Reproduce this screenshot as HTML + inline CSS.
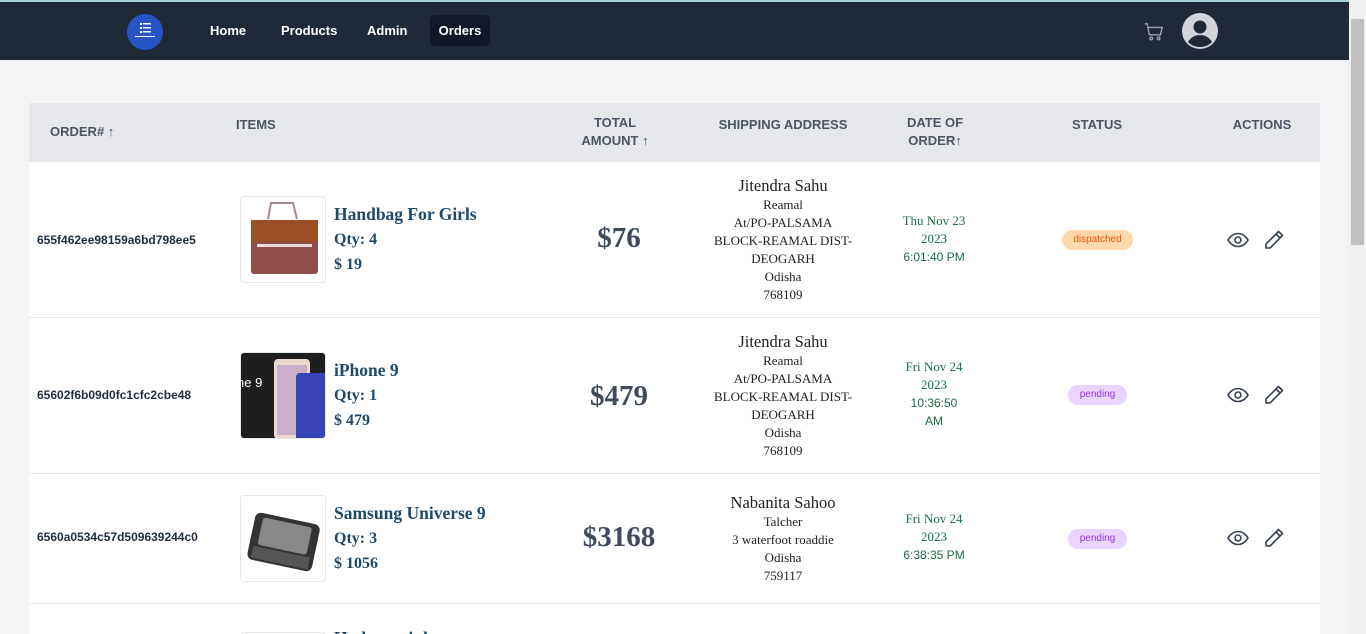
<!DOCTYPE html>
<html style="height:634px;overflow:hidden"><head><meta charset="utf-8"><style>
*{box-sizing:border-box;margin:0;padding:0}
body{width:1366px;height:634px;overflow:hidden;background:#f3f4f6;position:relative;font-family:"Liberation Sans",sans-serif}
.a{position:absolute}
nav{position:absolute;left:0;top:0;width:1349px;height:60px;background:#1f2937;border-top:2px solid #a8d0d8}
.nl{position:absolute;top:13px;height:31px;line-height:31px;color:#fff;font-weight:bold;font-size:13px;padding:0 11px;border-radius:5px}
.sb{position:absolute;right:0;top:0;width:17px;height:634px;background:#f0f0f0}
.th{position:absolute;color:#4b5563;font-weight:bold;font-size:13px;text-align:center;line-height:18px}
.row{position:absolute;left:29px;width:1291px;background:#fff;border-bottom:1px solid #e5e7eb;overflow:hidden}
.oid{position:absolute;left:8px;font-weight:bold;font-size:12px;color:#1f2d3d}
.img{position:absolute;left:211px;width:86px;height:87px;border:1px solid #e5e7eb;border-radius:4px;overflow:hidden;background:#fff}
.nm{position:absolute;left:305px;font-family:"Liberation Serif",serif;font-weight:bold;color:#1e4a6a;font-size:17.5px;line-height:25px}
.nm span{font-size:16px;display:block}
.tot{position:absolute;left:530px;width:120px;text-align:center;font-family:"Liberation Serif",serif;font-weight:bold;font-size:29px;color:#3f4a5c}
.addr{position:absolute;left:664px;width:180px;text-align:center;font-family:"Liberation Serif",serif;color:#222;font-size:13px;line-height:18px}
.addr b{font-weight:normal;font-size:16.5px;display:block;line-height:20px}
.dt{position:absolute;left:855px;width:100px;text-align:center;font-family:"Liberation Serif",serif;color:#1a6e47;font-size:13px;line-height:18px}
.dt i{font-style:normal;font-family:"Liberation Sans",sans-serif;font-size:12px}
.pill{position:absolute;height:20px;line-height:20px;border-radius:10px;font-size:10px;text-align:center}
.ic{position:absolute}
</style></head><body>
<nav>
<div class="a" style="left:127px;top:12px;width:36px;height:36px;border-radius:50%;background:#2754c5">
<svg width="36" height="36"><g fill="#fff"><rect x="13" y="9" width="2" height="2"/><rect x="16" y="9" width="8" height="1.5"/><rect x="13" y="13" width="2" height="2"/><rect x="16" y="13" width="8" height="1.5"/><rect x="13" y="17" width="2" height="2"/><rect x="16" y="17" width="8" height="1.5"/><rect x="8" y="22" width="20" height="1"/></g></svg></div>
<div class="nl" style="left:199px">Home</div>
<div class="nl" style="left:270px">Products</div>
<div class="nl" style="left:356px">Admin</div>
<div class="nl" style="left:430px;background:#111827;width:60px;padding:0;text-align:center">Orders</div>
<svg class="a" style="left:1143px;top:19px" width="22" height="22" viewBox="0 0 24 24" fill="none" stroke="#9ca3af" stroke-width="1.5"><path d="M2 3h2.5l2.5 12h12l2-8H6"/><circle cx="9" cy="19" r="1.5"/><circle cx="17" cy="19" r="1.5"/></svg>
<svg class="a" style="left:1182px;top:11px" width="36" height="36" viewBox="0 0 36 36"><circle cx="18" cy="18" r="18" fill="#d1d5db"/><circle cx="18" cy="14" r="6.5" fill="#1f2937"/><path d="M6 29c3-5 7-7 12-7s9 2 12 7c-3 3-7 5-12 5s-9-2-12-5z" fill="#1f2937"/></svg>
</nav>
<div class="sb"><div class="a" style="left:2px;top:19px;width:13px;height:226px;background:#c1c1c1"></div></div>
<div class="a" style="left:29px;top:103px;width:1291px;height:59px;background:#e5e7eb"></div>
<div class="th" style="left:50px;top:123px">ORDER# ↑</div>
<div class="th" style="left:236px;top:116px">ITEMS</div>
<div class="th" style="left:570px;top:114px;width:90px">TOTAL<br>AMOUNT ↑</div>
<div class="th" style="left:713px;top:116px;width:140px">SHIPPING ADDRESS</div>
<div class="th" style="left:890px;top:114px;width:90px">DATE OF<br>ORDER↑</div>
<div class="th" style="left:1064px;top:116px;width:66px">STATUS</div>
<div class="th" style="left:1222px;top:116px;width:80px">ACTIONS</div>

<div class="row" style="top:162px;height:156px">
<div class="oid" style="top:71px">655f462ee98159a6bd798ee5</div>
<div class="img" style="top:34px"><svg width="86" height="87"><path d="M27 22 L30 6 H52 L56 22" fill="none" stroke="#a08a90" stroke-width="2"/><rect x="10" y="23" width="67" height="40" fill="#9c4e24"/><rect x="10" y="45" width="67" height="32" rx="3" fill="#8e4f4c"/><rect x="16" y="47" width="55" height="3" fill="#e8ddd8"/></svg></div>
<div class="nm" style="top:40px">Handbag For Girls<span>Qty: 4</span><span>$ 19</span></div>
<div class="tot" style="top:60px">$76</div>
<div class="addr" style="top:14px"><b>Jitendra Sahu</b>Reamal<br>At/PO-PALSAMA<br>BLOCK-REAMAL DIST-<br>DEOGARH<br>Odisha<br>768109</div>
<div class="dt" style="top:50px">Thu Nov 23<br>2023<br><i>6:01:40 PM</i></div>
<div class="pill" style="left:1033px;top:68px;width:71px;background:#fed7aa;color:#ea580c">dispatched</div>
</div>

<div class="row" style="top:318px;height:156px">
<div class="oid" style="top:70px">65602f6b09d0fc1cfc2cbe48</div>
<div class="img" style="top:34px;background:#1e1e1e"><svg width="86" height="87"><text x="-4" y="34" fill="#fff" font-size="13" font-family="Liberation Sans">ne 9</text><rect x="33" y="6" width="36" height="80" rx="4" fill="#e8d8d0"/><rect x="36" y="12" width="30" height="70" fill="#c8b0c8"/><rect x="55" y="20" width="32" height="70" rx="4" fill="#3844b8"/></svg></div>
<div class="nm" style="top:40px">iPhone 9<span>Qty: 1</span><span>$ 479</span></div>
<div class="tot" style="top:62px">$479</div>
<div class="addr" style="top:14px"><b>Jitendra Sahu</b>Reamal<br>At/PO-PALSAMA<br>BLOCK-REAMAL DIST-<br>DEOGARH<br>Odisha<br>768109</div>
<div class="dt" style="top:40px">Fri Nov 24<br>2023<br><i>10:36:50<br>AM</i></div>
<div class="pill" style="left:1039px;top:67px;width:59px;background:#e9d5ff;color:#9333ea">pending</div>
</div>

<div class="row" style="top:474px;height:130px">
<div class="oid" style="top:56px">6560a0534c57d509639244c0</div>
<div class="img" style="top:21px"><svg width="86" height="87"><g transform="rotate(12 43 44)"><rect x="10" y="22" width="66" height="48" rx="6" fill="#333"/><rect x="18" y="26" width="50" height="28" rx="3" fill="#888"/><rect x="14" y="56" width="58" height="12" fill="#555"/></g></svg></div>
<div class="nm" style="top:27px">Samsung Universe 9<span>Qty: 3</span><span>$ 1056</span></div>
<div class="tot" style="top:47px">$3168</div>
<div class="addr" style="top:19px"><b>Nabanita Sahoo</b>Talcher<br>3 waterfoot roaddie<br>Odisha<br>759117</div>
<div class="dt" style="top:36px">Fri Nov 24<br>2023<br><i>6:38:35 PM</i></div>
<div class="pill" style="left:1039px;top:55px;width:59px;background:#e9d5ff;color:#9333ea">pending</div>
</div>
<div class="row" style="top:604px;height:30px;border:none">
<div class="img" style="top:28px"></div>
<div class="nm" style="top:22px">Hadsome iphone</div>
</div>

<svg width="0" height="0" style="position:absolute"><defs>
<g id="eye"><path d="M2 12s3.5-6.5 10-6.5S22 12 22 12s-3.5 6.5-10 6.5S2 12 2 12z" fill="none" stroke="#374151" stroke-width="1.6"/><circle cx="12" cy="12" r="3" fill="none" stroke="#374151" stroke-width="1.6"/></g>
<g id="pen"><path d="M16.5 3.5l4 4L8 20H4v-4z M14 6l4 4" fill="none" stroke="#374151" stroke-width="1.6" stroke-linejoin="round"/></g></defs></svg>
<svg class="ic" style="left:1226px;top:228px" width="24" height="24"><use href="#eye"/></svg>
<svg class="ic" style="left:1262px;top:228px" width="24" height="24"><use href="#pen"/></svg>
<svg class="ic" style="left:1226px;top:383px" width="24" height="24"><use href="#eye"/></svg>
<svg class="ic" style="left:1262px;top:383px" width="24" height="24"><use href="#pen"/></svg>
<svg class="ic" style="left:1226px;top:526px" width="24" height="24"><use href="#eye"/></svg>
<svg class="ic" style="left:1262px;top:526px" width="24" height="24"><use href="#pen"/></svg>
</body></html>
